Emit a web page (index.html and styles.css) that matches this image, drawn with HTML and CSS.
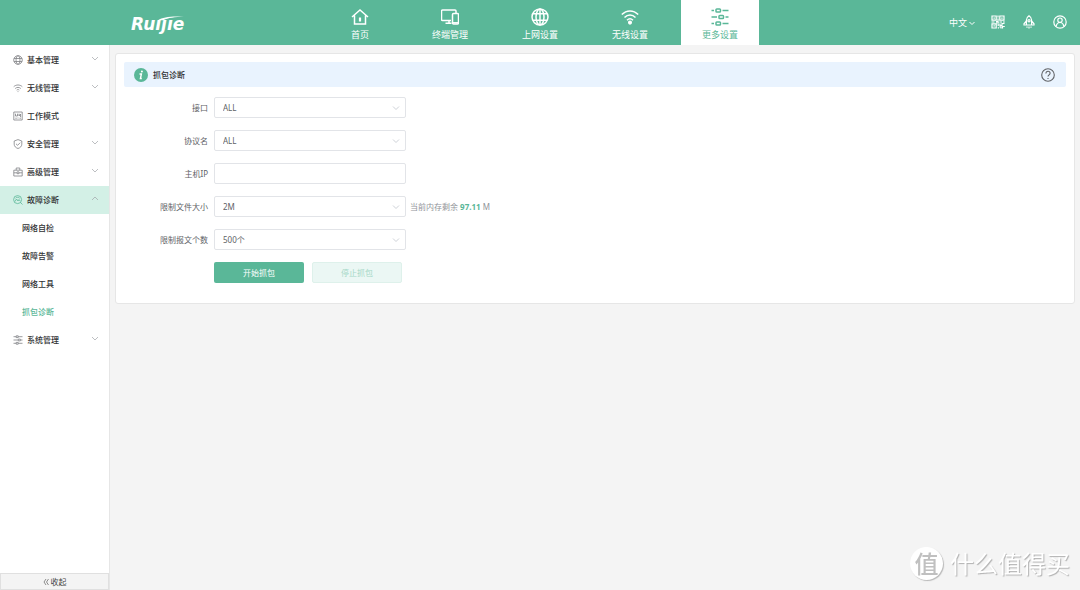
FILE: index.html
```html
<!DOCTYPE html>
<html lang="zh-CN">
<head>
<meta charset="utf-8">
<title>抓包诊断</title>
<link rel="stylesheet" href="styles.css">
</head>
<body>
<header class="topbar">
  <a class="logo" href="#" aria-label="Ruijie">
    <span class="logo-word">Ruijie</span>
    <svg class="logo-swoosh" viewBox="0 0 28 5" aria-hidden="true"><path class="swoosh-gap" d="M0 0H28V4H0z"/><path class="swoosh" d="M1 4.200C6 1.200 14 0 27 .8C18 1 11 1.800 6.500 4.200z"/></svg>
  </a>
  <nav class="nav">
    <a class="nav-item" href="#">
      <svg class="nav-icon" viewBox="0 0 18 18"><path d="M1 9 9 2l8 7M3.500 7.500V16h11V7.500"/><path d="M9 9.500v4" stroke-width="2.200"/></svg>
      <span>首页</span>
    </a>
    <a class="nav-item" href="#">
      <svg class="nav-icon" viewBox="0 0 18 18"><path d="M10 12.500H1.500a1 1 0 0 1-1-1V3a1 1 0 0 1 1-1h12.500a1 1 0 0 1 1 1v2M4.500 15.200h6M8 12.500v3"/><rect x="11.500" y="5.500" width="6" height="10.500" rx="1"/><path d="M12 14.800h5"/></svg>
      <span>终端管理</span>
    </a>
    <a class="nav-item" href="#">
      <svg class="nav-icon" viewBox="0 0 18 18"><circle cx="9" cy="9" r="8"/><ellipse cx="9" cy="9" rx="4" ry="8"/><path d="M2 5.700h14M2 12.300h14M9 1v16"/></svg>
      <span>上网设置</span>
    </a>
    <a class="nav-item" href="#">
      <svg class="nav-icon" viewBox="0 0 18 18"><path d="M.8 6.500C5.500 1.700 12.500 1.700 17.200 6.500M3.500 9.500c3.200-3.200 7.800-3.200 11 0M6 12.200c1.800-1.700 4.200-1.700 6 0"/><circle class="solid" cx="9" cy="14.600" r="1.300"/></svg>
      <span>无线设置</span>
    </a>
    <a class="nav-item active" href="#" aria-current="page">
      <svg class="nav-icon" viewBox="0 0 18 18"><path d="M.5 2.500H3M11.500 2.500h6M.5 9H6M14.500 9h3M.5 15.500H3M11.500 15.500h6"/><rect x="5" y="1" width="4.500" height="3" rx=".8"/><rect x="8" y="7.500" width="4.500" height="3" rx=".8"/><rect x="5" y="14" width="4.500" height="3" rx=".8"/></svg>
      <span>更多设置</span>
    </a>
  </nav>
  <div class="tools">
    <button class="lang" type="button">中文 <svg class="lang-arrow" viewBox="0 0 8 8"><path d="m1.500 3 2.500 2.500 2.500-2.500"/></svg></button>
    <button class="tool" type="button" aria-label="二维码"><svg viewBox="0 0 14 14"><path d="M1 1h4.200v4.200H1zM8.800 1H13v4.200H8.800zM1 8.800h4.200V13H1z"/><path d="M2.500 3.100h1.300M10.300 3.100h1.300M2.500 10.900h1.300M7 .5v2M7 3.500v3H5M.5 7H3.500M5 7.800h3M8.500 7H11M12 7h1.800M9 8.500v2h2V8.500h2.500M7.200 9v2M8.500 11.800h1.500v1.700M11.500 11v2.500M12 11.500h1.800M6.800 12.800h1.200"/></svg></button>
    <button class="tool" type="button" aria-label="加速"><svg viewBox="0 0 14 14"><path d="M4.400 10V5C4.400 3.200 5.500 1.800 7 .8c1.500 1 2.600 2.400 2.600 4.200v5zM4.400 6 2 8.800V10h2.400M9.600 6 12 8.800V10H9.600M5 11.500v1.300M7 11.500v2M9 11.500v1.300"/><circle cx="7" cy="5.800" r="1.100"/></svg></button>
    <button class="tool" type="button" aria-label="用户"><svg viewBox="0 0 14 14"><circle cx="7" cy="7" r="6.200"/><circle cx="7" cy="5.200" r="2.200"/><path d="M3.300 11.500C3.500 9 4.800 7.500 7 7.500s3.500 1.500 3.700 4"/></svg></button>
  </div>
</header>

<div class="layout">
  <aside class="sidebar">
    <nav class="menu">
      <a class="menu-item" href="#"><svg class="menu-icon" viewBox="0 0 10 10"><circle cx="5" cy="5" r="4.300"/><ellipse cx="5" cy="5" rx="2" ry="4.300"/><path d="M1 3.500h8M1 6.500h8"/></svg><span>基本管理</span><svg class="arrow" viewBox="0 0 8 8"><path d="m1 2 3 3 3-3"/></svg></a>
      <a class="menu-item" href="#"><svg class="menu-icon" viewBox="0 0 10 10"><path d="M.7 3.700c2.500-2.300 6.100-2.300 8.600 0M2.200 5.500c1.700-1.500 3.900-1.500 5.600 0M3.700 7.100c.8-.7 1.800-.7 2.600 0M4.600 8.600h.8"/></svg><span>无线管理</span><svg class="arrow" viewBox="0 0 8 8"><path d="m1 2 3 3 3-3"/></svg></a>
      <a class="menu-item" href="#"><svg class="menu-icon" viewBox="0 0 10 10"><path d="M.8 1h8.400v8H.8zM2.500 2.700V5h2V2.700M6 2.700V5l1.500-2v3M2.300 7.200h1.500M5 6.500v1M6.500 7.200H8"/></svg><span>工作模式</span></a>
      <a class="menu-item" href="#"><svg class="menu-icon" viewBox="0 0 10 10"><path d="M5 .6 8.800 2v3.200C8.800 7.300 7.200 8.800 5 9.500 2.800 8.800 1.200 7.300 1.200 5.200V2zM3 4.800l1.600 1.500 2.600-2.600"/></svg><span>安全管理</span><svg class="arrow" viewBox="0 0 8 8"><path d="m1 2 3 3 3-3"/></svg></a>
      <a class="menu-item" href="#"><svg class="menu-icon" viewBox="0 0 10 10"><path d="M.8 3.200h8.400V9H.8zM3.200 3.200V1h3.600v2.200M.8 5.800h3M6.200 5.800h3M4 4.900h2v1.800H4z"/></svg><span>高级管理</span><svg class="arrow" viewBox="0 0 8 8"><path d="m1 2 3 3 3-3"/></svg></a>
      <a class="menu-item open" href="#" aria-expanded="true"><svg class="menu-icon" viewBox="0 0 10 10"><circle cx="4.600" cy="4.600" r="4"/><path d="m7.300 7.300 2.200 2.200M2 6.500 3.500 4 5 6l1-1.500 1.200 1.600M2.500 3.200C3.700 2 5.500 2 6.700 3.200"/></svg><span>故障诊断</span><svg class="arrow" viewBox="0 0 8 8"><path d="m1 5 3-3 3 3"/></svg></a>
      <a class="menu-item sub" href="#">网络自检</a>
      <a class="menu-item sub" href="#">故障告警</a>
      <a class="menu-item sub" href="#">网络工具</a>
      <a class="menu-item sub current" href="#" aria-current="page">抓包诊断</a>
      <a class="menu-item" href="#"><svg class="menu-icon" viewBox="0 0 10 10"><path d="M.5 1.700h2.700M5.200 1.700h4.300M.5 5h4.700M7.300 5h2.200M.5 8.300h2.700M5.200 8.300h4.300M3.200.8h2v1.800h-2zM5.300 4.100h2v1.800h-2zM3.200 7.400h2v1.800h-2z"/></svg><span>系统管理</span><svg class="arrow" viewBox="0 0 8 8"><path d="m1 2 3 3 3-3"/></svg></a>
    </nav>
    <button class="collapse" type="button"><svg viewBox="0 0 6 8"><path d="M3 1 1 4l2 3M5.500 1l-2 3 2 3"/></svg>收起</button>
  </aside>

  <main class="main">
    <section class="card">
      <div class="card-head">
        <svg class="info" viewBox="0 0 14 14" aria-hidden="true"><circle cx="7" cy="7" r="7"/><path d="M5.500 6h1.900l-1 4.500h1.400"/><circle class="info-dot" cx="7.900" cy="3.500" r="1"/></svg>
        <h1 class="card-title">抓包诊断</h1>
        <button class="help" type="button" aria-label="帮助"><svg viewBox="0 0 14 14"><circle cx="7" cy="7" r="6.300"/><path d="M4.900 5.500C4.900 4.100 5.800 3.300 7 3.300s2.100.8 2.100 2c0 1.500-2.100 1.700-2.100 3.300M7 9.900v1.100"/></svg></button>
      </div>
      <form class="form">
        <div class="row">
          <label class="label" for="iface">接口</label>
          <div class="field"><select class="control" id="iface"><option>ALL</option></select><svg class="caret" viewBox="0 0 8 8"><path d="m1 2.500 3 3 3-3"/></svg></div>
        </div>
        <div class="row">
          <label class="label" for="proto">协议名</label>
          <div class="field"><select class="control" id="proto"><option>ALL</option></select><svg class="caret" viewBox="0 0 8 8"><path d="m1 2.500 3 3 3-3"/></svg></div>
        </div>
        <div class="row">
          <label class="label" for="host">主机IP</label>
          <div class="field"><input class="control" id="host" type="text"></div>
        </div>
        <div class="row">
          <label class="label" for="size">限制文件大小</label>
          <div class="field"><select class="control" id="size"><option>2M</option></select><svg class="caret" viewBox="0 0 8 8"><path d="m1 2.500 3 3 3-3"/></svg></div>
          <span class="hint">当前内存剩余 <b>97.11</b> M</span>
        </div>
        <div class="row">
          <label class="label" for="count">限制报文个数</label>
          <div class="field"><select class="control" id="count"><option>500个</option></select><svg class="caret" viewBox="0 0 8 8"><path d="m1 2.500 3 3 3-3"/></svg></div>
        </div>
        <div class="row actions">
          <button class="btn" type="button">开始抓包</button>
          <button class="btn" type="button" disabled>停止抓包</button>
        </div>
      </form>
    </section>
  </main>
</div>

<div class="watermark"><span class="watermark-badge">值</span><span>什么值得买</span></div>
</body>
</html>
```

FILE: styles.css
```css
* {
  box-sizing: border-box;
}

body {
  margin: 0;
  min-height: 100vh;
  display: flex;
  flex-direction: column;
  background: #f4f4f4;
  color: #606266;
  font: 8px/12px "Noto Sans", "Noto Sans CJK SC", sans-serif;
}

a {
  color: inherit;
  text-decoration: none;
}

button,
input,
select {
  font: inherit;
  color: inherit;
  margin: 0;
}

button {
  padding: 0;
  border: 0;
  background: none;
  cursor: pointer;
}

svg {
  display: block;
  flex: none;
  fill: none;
  stroke: currentColor;
}

/* Top bar */
.topbar {
  display: flex;
  height: 45px;
  background: #5ab798;
  color: #fff;
}

.logo {
  position: relative;
  width: 321px;
  padding: 14px 0 0 131px;
}

.logo-word {
  font: italic bold 17px/20px "DejaVu Sans", sans-serif;
}

.logo-swoosh {
  position: absolute;
  left: 157px;
  top: 16px;
  width: 28px;
  height: 5px;
  stroke: none;
}

.swoosh-gap {
  fill: #5ab798;
}

.swoosh {
  fill: #fff;
}

.nav {
  display: flex;
  gap: 12px;
}

.nav-item {
  width: 78px;
  display: flex;
  flex-direction: column;
  align-items: center;
  gap: 3px;
  padding-top: 8px;
  font-size: 9px;
}

.nav-item.active {
  background: #fff;
  color: #5ab798;
}

.nav-icon {
  width: 18px;
  height: 18px;
  stroke-width: 1.5;
}

.solid {
  fill: currentColor;
}

.tools {
  margin-left: auto;
  padding-right: 13px;
  display: flex;
  align-items: center;
  gap: 17px;
}

.lang {
  display: flex;
  align-items: center;
  gap: 1px;
  margin-right: -2px;
  font-size: 9px;
}

.lang-arrow {
  width: 8px;
  height: 8px;
}

.tool svg {
  width: 14px;
  height: 14px;
  margin-bottom: 2px;
  stroke-width: 1.2;
}

/* Sidebar */
.layout {
  flex: 1;
  display: flex;
}

.sidebar {
  width: 110px;
  flex: none;
  display: flex;
  flex-direction: column;
  border-right: 1px solid #e6e6e6;
  background: #fff;
}

.menu {
  flex: 1;
  padding-top: 1px;
}

.menu-item {
  display: flex;
  align-items: center;
  gap: 4px;
  height: 28px;
  padding: 0 10px 0 13px;
  color: #303133;
  font-weight: 500;
}

.menu-item.sub {
  padding-left: 22px;
}

.menu-item.open {
  background: #d3f0e6;
}

.menu-item.current,
.open .menu-icon {
  color: #5ab798;
}

.menu-icon {
  width: 10px;
  height: 10px;
  color: #808285;
  stroke-width: 0.8;
}

.arrow {
  width: 8px;
  height: 8px;
  margin-bottom: 2px;
  margin-left: auto;
  color: #a0a3a8;
  stroke-width: 0.7;
}

.open .menu-icon {
  color: #5ab798;
}

.collapse {
  display: flex;
  align-items: center;
  justify-content: center;
  gap: 2px;
  height: 17px;
  border: 1px solid #e0e0e0;
  background: #f4f4f4;
  color: #444;
}

.collapse svg {
  width: 6px;
  height: 8px;
  stroke-width: 0.6;
}

/* Content */
.main {
  flex: 1;
  padding: 8px 5px;
}

.card {
  padding: 8px 8px 20px;
  border: 1px solid #e6e6e6;
  border-radius: 3px;
  background: #fff;
}

.card-head {
  display: flex;
  align-items: center;
  gap: 5px;
  height: 25px;
  padding: 0 11px 0 10px;
  border-radius: 2px;
  background: #e9f3fe;
}

.info {
  width: 14px;
  height: 14px;
  fill: #5ab798;
  stroke: none;
}

.info path {
  fill: none;
  stroke: #fff;
  stroke-width: 1.4;
}

.info .info-dot {
  fill: #fff;
}

.card-title {
  margin: 0;
  color: #303133;
  font-size: 8px;
  font-weight: 500;
}

.help {
  margin-left: auto;
}

.help svg {
  width: 14px;
  height: 14px;
  stroke-width: 1.1;
}

.form {
  display: flex;
  flex-direction: column;
  gap: 12px;
  margin-top: 10px;
}

.row {
  display: flex;
  align-items: center;
}

.label {
  width: 84px;
  margin-right: 6px;
  text-align: right;
}

.field {
  display: grid;
  align-items: center;
  width: 192px;
}

.field > * {
  grid-area: 1 / 1;
}

.control {
  appearance: none;
  width: 100%;
  height: 21px;
  padding: 0 8px;
  border: 1px solid #e2e4e8;
  border-radius: 2px;
  background: #fff;
}

.caret {
  width: 8px;
  height: 8px;
  justify-self: end;
  margin-right: 6px;
  color: #c0c4cc;
  stroke-width: 0.8;
  pointer-events: none;
}

.hint {
  margin-left: 4px;
  color: #909399;
}

.hint b {
  color: #5ab798;
}

.actions {
  gap: 8px;
  padding-left: 90px;
}

.btn {
  width: 90px;
  height: 21px;
  border-radius: 2px;
  background: #5ab798;
  color: #fff;
}

.btn:disabled {
  border: 1px solid #def1eb;
  background: #ebf7f4;
  color: #a5d8c7;
}

/* Floating watermark */
.watermark {
  position: fixed;
  right: 10px;
  bottom: 10px;
  display: flex;
  align-items: center;
  gap: 7px;
  color: #fff;
  font-size: 24px;
  line-height: 33px;
  text-shadow: 1px 1px 1px #b0b0b0;
}

.watermark-badge {
  width: 33px;
  height: 33px;
  border-radius: 50%;
  background: #fff;
  box-shadow: 1px 1px 1px #b8b8b8;
  color: #c0c0c0;
  font-weight: 500;
  text-align: center;
  text-shadow: none;
}
```
